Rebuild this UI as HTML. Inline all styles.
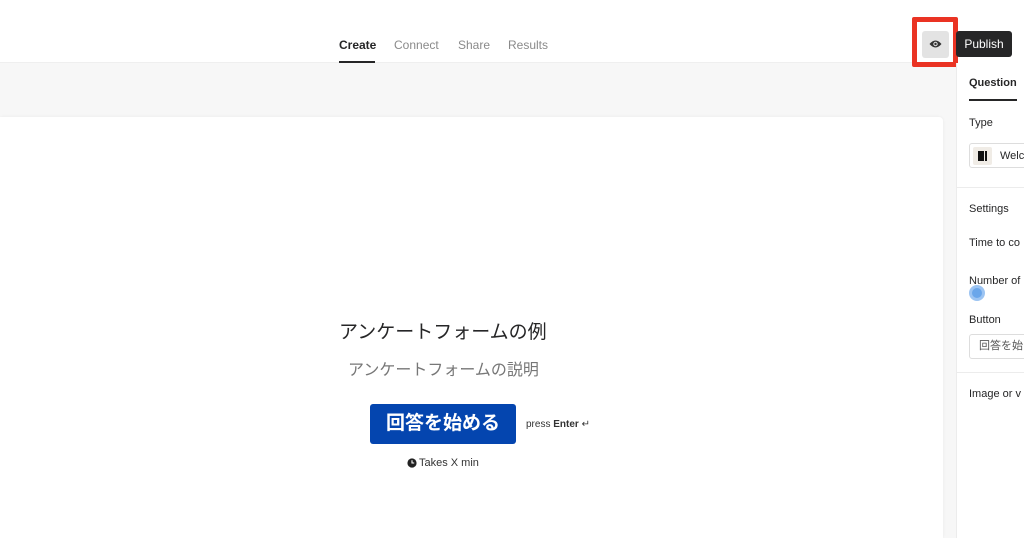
<!DOCTYPE html>
<html><head><meta charset="utf-8"><style>
*{margin:0;padding:0;box-sizing:border-box}
body{width:1024px;height:538px;overflow:hidden;background:#fff;font-family:"Liberation Sans","Noto Sans CJK JP",sans-serif;position:relative;color:#262627}
.a{position:absolute}
.tab{position:absolute;top:38px;font-size:12px;color:#8a8a8a}
</style></head><body>
<div class="a" style="left:0;top:62px;width:956px;height:476px;background:#f7f7f7;border-top:1px solid #efefef"></div>
<div class="a" style="left:0;top:117px;width:943px;height:421px;background:#fff;border-radius:0 4px 0 0;box-shadow:0 0 3px rgba(0,0,0,.06)"></div>
<div class="tab" style="left:339px;color:#262627;font-weight:bold">Create</div>
<div class="a" style="left:339px;top:61px;width:36px;height:2px;background:#262627"></div>
<div class="tab" style="left:394px">Connect</div>
<div class="tab" style="left:458px">Share</div>
<div class="tab" style="left:508px">Results</div>
<div class="a" style="left:912px;top:17px;width:46px;height:50px;border:5px solid #ea3323;border-radius:2px"></div>
<div class="a" style="left:922px;top:31px;width:27px;height:27px;background:#e3e3e3;border-radius:3px"></div>
<svg class="a" style="left:929px;top:39px" width="13" height="10" viewBox="0 0 13 10"><path d="M0.5 5Q6.5-2 12.5 5Q6.5 12 0.5 5Z" fill="#333"/><circle cx="6.5" cy="5" r="2.2" fill="#e3e3e3"/><circle cx="6.5" cy="5" r="1.2" fill="#333"/></svg>
<div class="a" style="left:956px;top:31px;width:56px;height:26px;background:#262627;border-radius:3px;color:#fff;font-size:12px;line-height:26px;text-align:center">Publish</div>
<div class="a" style="left:956px;top:63px;width:68px;height:475px;background:#fff;border-left:1px solid #ececec"></div>
<div class="a" style="left:969px;top:77px;font-size:11px;font-weight:bold">Question</div>
<div class="a" style="left:969px;top:99px;width:48px;height:2px;background:#262627"></div>
<div class="a" style="left:969px;top:117px;font-size:11px">Type</div>
<div class="a" style="left:969px;top:143px;width:60px;height:25px;border:1px solid #ddd;border-radius:3px"></div>
<div class="a" style="left:973px;top:147px;width:19px;height:18px;background:#f0ece6;border-radius:2px"></div>
<div class="a" style="left:978px;top:151px;width:6px;height:10px;background:#111"></div>
<div class="a" style="left:985px;top:151px;width:2px;height:10px;background:#111"></div>
<div class="a" style="left:1000px;top:150px;font-size:11px">Welc</div>
<div class="a" style="left:957px;top:187px;width:67px;height:1px;background:#ececec"></div>
<div class="a" style="left:969px;top:203px;font-size:11px">Settings</div>
<div class="a" style="left:969px;top:237px;font-size:11px">Time to co</div>
<div class="a" style="left:969px;top:275px;font-size:11px">Number of</div>
<div class="a" style="left:969px;top:285px;width:16px;height:16px;border-radius:50%;background:#6aa6ea;border:3px solid #9cc4f2"></div>
<div class="a" style="left:969px;top:314px;font-size:11px">Button</div>
<div class="a" style="left:969px;top:334px;width:60px;height:25px;border:1px solid #ddd;border-radius:3px;font-size:11px;line-height:23px;padding-left:9px;color:#555">回答を始</div>
<div class="a" style="left:957px;top:372px;width:67px;height:1px;background:#ececec"></div>
<div class="a" style="left:969px;top:388px;font-size:11px">Image or v</div>
<div class="a" style="left:339px;top:317px;font-size:19px;color:#262627">アンケートフォームの例</div>
<div class="a" style="left:348px;top:356px;font-size:16px;color:#777">アンケートフォームの説明</div>
<div class="a" style="left:370px;top:404px;width:146px;height:40px;background:#0445af;border-radius:3px;color:#fff;font-size:19px;font-weight:bold;line-height:40px;text-align:center">回答を始める</div>
<div class="a" style="left:526px;top:419px;font-size:10px;color:#333">press <b>Enter</b> ↵</div>
<svg class="a" style="left:407px;top:458px" width="10" height="10" viewBox="0 0 10 10"><circle cx="5" cy="5" r="4.6" fill="#222"/><path d="M5 2.2V5H7.2" stroke="#fff" stroke-width="1.1" fill="none"/></svg>
<div class="a" style="left:419px;top:457px;font-size:11px;color:#333">Takes X min</div>
</body></html>
